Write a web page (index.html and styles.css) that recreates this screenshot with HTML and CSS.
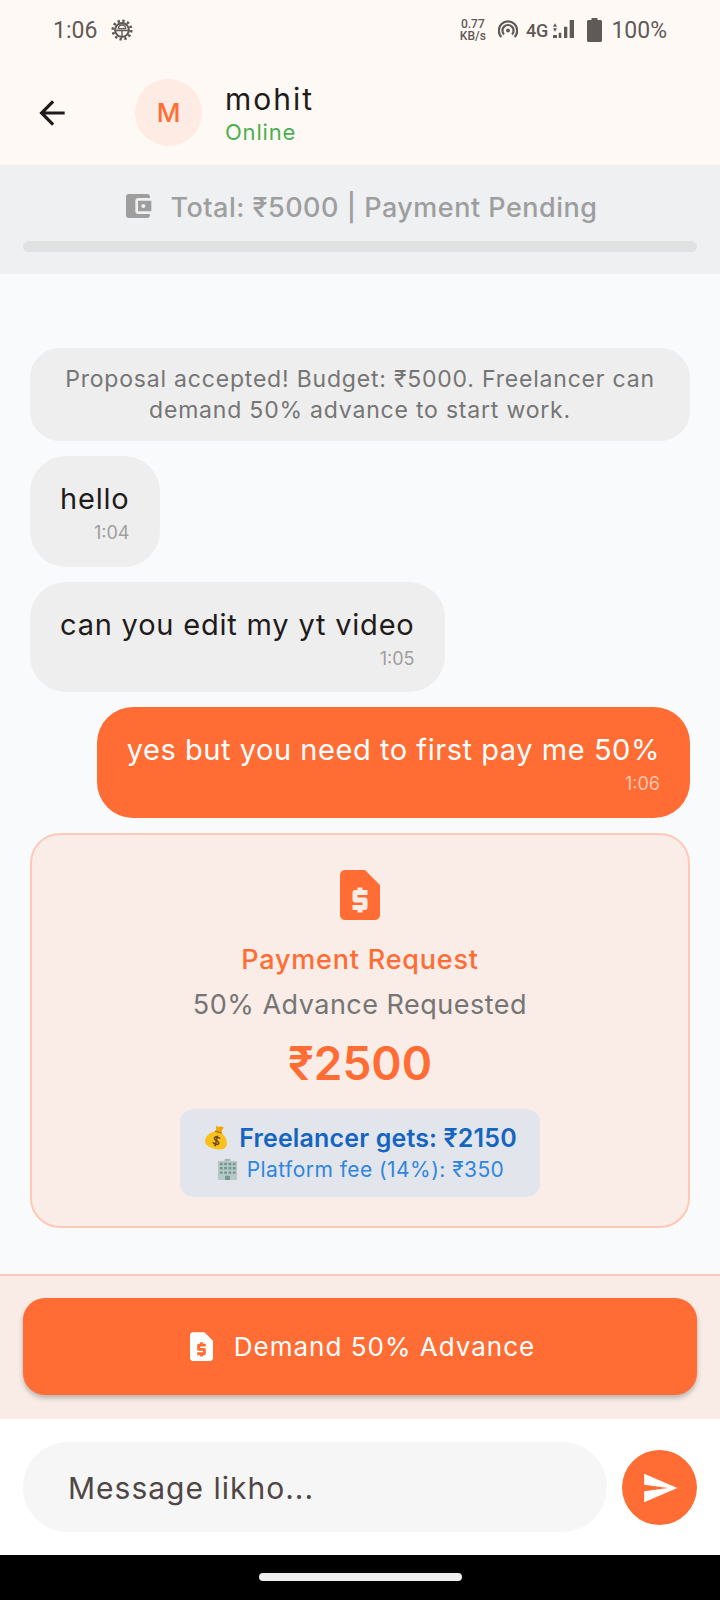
FILE: index.html
```html
<!DOCTYPE html>
<html lang="en">
<head>
    <meta charset="UTF-8">
    <title>Chat</title>
    <link rel="stylesheet" href="styles.css">
</head>
<body>

<div class="top">
    <div class="status">
        <div class="status-left">
            <span class="clock">1:06</span>
            <svg class="gear" viewBox="0 0 24 24">
                <circle cx="12" cy="12" r="7.500" fill="none" stroke="#5f5a57" stroke-width="2.200"/>
                <circle cx="12" cy="12" r="10" fill="none" stroke="#5f5a57" stroke-width="3" stroke-dasharray="2.600 2.640"/>
                <path d="M5 12.500h14M12 12.500v6M8 10.500a4 4 0 0 1 8 0z" stroke="#5f5a57" stroke-width="1.500" fill="none"/>
            </svg>
        </div>
        <div class="status-right">
            <div class="speed"><span>0.77</span><span>KB/s</span></div>
            <svg class="hotspot" viewBox="0 0 20 20">
                <circle cx="10" cy="10.500" r="2" fill="#5f5a57"/>
                <path d="M6 14.500a5.600 5.600 0 1 1 8 0M3.400 17a9.200 9.200 0 1 1 13.200 0" fill="none" stroke="#5f5a57" stroke-width="2.200"/>
            </svg>
            <span class="net">4G</span>
            <svg class="signal" viewBox="0 0 22 20">
                <path d="M2 3.300l2 3.400H0zM2 11.700L0 8.300h4z" fill="#5f5a57"/>
                <path d="M0 15h4v3H0zM5.700 12.700h2.600V18H5.700zM11 6.700h3.300V18H11zM16.700 0H21v18h-4.300z" fill="#5f5a57"/>
            </svg>
            <svg class="battery" viewBox="0 0 15 24">
                <path d="M4.500 0h6v2h3c.8 0 1.500.7 1.500 1.500v19c0 .8-.7 1.500-1.500 1.500h-12C.7 24 0 23.300 0 22.500v-19C0 2.700.7 2 1.500 2h3z" fill="#5f5a57"/>
            </svg>
            <span class="pct">100%</span>
        </div>
    </div>
    <div class="appbar">
        <svg class="back" viewBox="0 0 24 24"><path d="M20 11H7.830l5.590-5.590L12 4l-8 8 8 8 1.410-1.410L7.830 13H20v-2z"/></svg>
        <div class="avatar">M</div>
        <div class="who">
            <div class="name">mohit</div>
            <div class="online">Online</div>
        </div>
    </div>
</div>

<div class="total">
    <div class="total-line">
        <svg class="wallet" viewBox="0 0 24 24"><path d="M21 18v1c0 1.100-.9 2-2 2H5c-1.110 0-2-.9-2-2V5c0-1.100.890-2 2-2h14c1.100 0 2 .9 2 2v1h-9c-1.110 0-2 .9-2 2v8c0 1.100.890 2 2 2h9zm-9-2h10V8H12v8zm4-2.500c-.830 0-1.500-.670-1.500-1.500s.670-1.500 1.500-1.500 1.500.670 1.500 1.500-.670 1.500-1.500 1.500z"/></svg>
        <span>Total: ₹5000 | Payment Pending</span>
    </div>
    <div class="progress"></div>
</div>

<div class="chat">
    <div class="system">Proposal accepted! Budget: ₹5000. Freelancer can demand 50% advance to start work.</div>

    <div class="bubble them">
        <div class="msg">hello</div>
        <div class="time">1:04</div>
    </div>
    <div class="bubble them">
        <div class="msg">can you edit my yt video</div>
        <div class="time">1:05</div>
    </div>
    <div class="bubble me">
        <div class="msg">yes but you need to first pay me 50%</div>
        <div class="time">1:06</div>
    </div>

    <div class="request">
        <svg class="request-icon" viewBox="4 2 16 20"><path d="M14 2H6c-1.100 0-1.990.9-1.990 2L4 20c0 1.100.890 2 1.990 2H18c1.100 0 2-.9 2-2V8l-6-6zm1 10h-4v1h3c.550 0 1 .450 1 1v3c0 .550-.450 1-1 1h-1v1h-2v-1H9v-2h4v-1h-3c-.550 0-1-.450-1-1v-3c0-.550.450-1 1-1h1V9h2v1h2v2z"/></svg>
        <div class="request-title">Payment Request</div>
        <div class="request-sub">50% Advance Requested</div>
        <div class="request-amount">₹2500</div>
        <div class="split">
            <div class="split-main">
                <svg class="emoji" viewBox="0 0 28 25">
                    <g transform="rotate(14 14 13)">
                        <path d="M10.500 7C5 10 2.500 14.500 3 18.500 3.500 22.500 8 24 14 24s10.500-1.500 11-5.500c.5-4-2-8.500-7.500-11.500z" fill="#fcc21b"/>
                        <path d="M10 1c1.500 1 2.500.8 4 .3s3-.8 4-.3l-1.500 5.500h-5z" fill="#f2a600"/>
                        <path d="M10.500 7h7" stroke="#b9770e" stroke-width="1.600"/>
                        <path d="M17 13c-1-1.500-5.500-1.500-5.500.8s5.500 1.400 5.500 3.700-4.500 2.300-6 .7M14 10.500v11" fill="none" stroke="#6b4a1e" stroke-width="1.600"/>
                    </g>
                </svg>
                <span>Freelancer gets: ₹2150</span>
            </div>
            <div class="split-fee">
                <svg class="emoji small" viewBox="0 0 24 24">
                    <path d="M2 3h20v20H2z" fill="#b9c8c6"/>
                    <path d="M9 1h6v2H9z" fill="#a3b3b1"/>
                    <path d="M4 5h3v2.500H4zM8.500 5h3v2.500h-3zM13 5h3v2.500h-3zM17.500 5h3v2.500h-3zM4 9.500h3V12H4zM8.500 9.500h3V12h-3zM13 9.500h3V12h-3zM17.500 9.500h3V12h-3zM4 14h3v2.500H4zM8.500 14h3v2.500h-3zM13 14h3v2.500h-3zM17.500 14h3v2.500h-3zM9.500 18.500h5V23h-5z" fill="#6f9a94"/>
                </svg>
                <span>Platform fee (14%): ₹350</span>
            </div>
        </div>
    </div>
</div>

<div class="demand">
    <div class="demand-btn">
        <svg class="demand-icon" viewBox="4 2 16 20"><path d="M14 2H6c-1.100 0-1.990.9-1.990 2L4 20c0 1.100.890 2 1.990 2H18c1.100 0 2-.9 2-2V8l-6-6zm1 10h-4v1h3c.550 0 1 .450 1 1v3c0 .550-.450 1-1 1h-1v1h-2v-1H9v-2h4v-1h-3c-.550 0-1-.450-1-1v-3c0-.550.450-1 1-1h1V9h2v1h2v2z"/></svg>
        <span>Demand 50% Advance</span>
    </div>
</div>

<div class="composer">
    <div class="field">Message likho...</div>
    <div class="send">
        <svg viewBox="0 0 24 24"><path d="M2.010 21L23 12 2.010 3 2 10l15 2-15 2z"/></svg>
    </div>
</div>

<div class="navbar">
    <div class="handle"></div>
</div>

</body>
</html>
```

FILE: styles.css
```css
body {
    margin: 0;
    width: 720px;
    height: 1600px;
    display: flex;
    flex-direction: column;
    font-family: "Inter", "Liberation Sans", sans-serif;
    color: #1f1b1a;
    background: #f8fafc;
    overflow: hidden;
}

.top {
    height: 165px;
    background: #fff9f5;
    flex-shrink: 0;
}

.status {
    height: 60px;
    padding: 0 53px;
    display: flex;
    justify-content: space-between;
    align-items: center;
    color: #5f5a57;
    font-family: "Roboto", sans-serif;
}

.status-left, .status-right {
    display: flex;
    align-items: center;
}

.clock {
    font-size: 23px;
}

.gear {
    width: 22px;
    height: 22px;
    margin-left: 14px;
}

.speed {
    display: flex;
    flex-direction: column;
    align-items: center;
    font-size: 12px;
    line-height: 12px;
    font-weight: 500;
}

.hotspot {
    width: 20px;
    height: 20px;
    margin-left: 12px;
}

.net {
    font-size: 18px;
    font-weight: 500;
    margin-left: 8px;
}

.signal {
    width: 22px;
    height: 20px;
    margin-left: 5px;
}

.battery {
    width: 15px;
    height: 24px;
    margin-left: 12px;
}

.pct {
    font-size: 23px;
    margin-left: 9px;
}

.appbar {
    height: 105px;
    display: flex;
    align-items: center;
    padding-left: 33px;
}

.back {
    width: 38px;
    height: 38px;
    fill: #1f1b1a;
    flex-shrink: 0;
}

.avatar {
    width: 67px;
    height: 67px;
    margin-left: 64px;
    border-radius: 50%;
    background: #fdebe4;
    color: #ff6d35;
    font-size: 26px;
    font-weight: 500;
    display: flex;
    align-items: center;
    justify-content: center;
}

.who {
    margin-left: 23px;
}

.name {
    font-size: 30px;
    line-height: 36px;
    letter-spacing: 2px;
}

.online {
    margin-top: 2px;
    font-size: 22px;
    line-height: 26px;
    letter-spacing: 0.8px;
    color: #4caf50;
}

.total {
    height: 109px;
    box-sizing: border-box;
    flex-shrink: 0;
    background: #eef0f2;
    padding: 19px 23px 0;
}

.total-line {
    display: flex;
    justify-content: center;
    align-items: center;
    color: #9e9e9e;
    font-size: 27px;
    font-weight: 500;
    letter-spacing: 0.5px;
    line-height: 40px;
    margin-bottom: 13px;
}

.total-line span {
    margin-top: 4px;
}

.wallet {
    width: 32px;
    height: 32px;
    fill: #9e9e9e;
    margin-right: 16px;
}

.progress {
    height: 11px;
    border-radius: 6px;
    background: #e0e2e2;
}

.chat {
    flex: 1;
    padding: 74px 30px 0;
    display: flex;
    flex-direction: column;
    gap: 15px;
    align-items: flex-start;
}

.system {
    align-self: stretch;
    box-sizing: border-box;
    height: 93px;
    padding: 16px 20px;
    border-radius: 30px;
    background: #eeeeee;
    color: #757575;
    font-size: 23px;
    letter-spacing: 0.8px;
    line-height: 31px;
    text-align: center;
}

.bubble {
    box-sizing: border-box;
    height: 110.500px;
    padding: 21px 30px 0;
    border-radius: 36px;
    background: #eeeeee;
    font-size: 29px;
    letter-spacing: 0.8px;
}

.msg {
    line-height: 43px;
}

.time {
    margin-top: 1px;
    font-size: 18px;
    line-height: 24px;
    letter-spacing: 0;
    color: #9e9e9e;
    text-align: right;
}

.me {
    align-self: flex-end;
    background: #ff6d35;
    color: #ffffff;
    letter-spacing: 0.55px;
}

.me .time {
    color: #ffc4ae;
}

.request {
    align-self: stretch;
    box-sizing: border-box;
    height: 395.500px;
    padding-top: 35px;
    border: 2px solid #ffc9b5;
    border-radius: 30px;
    background: #faece6;
    display: flex;
    flex-direction: column;
    align-items: center;
}

.request-icon {
    width: 40px;
    height: 50px;
    fill: #ff6d35;
}

.request-title {
    margin-top: 20px;
    font-size: 27px;
    font-weight: 500;
    letter-spacing: 0.8px;
    line-height: 40px;
    color: #ff6d35;
}

.request-sub {
    margin-top: 5px;
    font-size: 27px;
    letter-spacing: 0.5px;
    line-height: 40px;
    color: #757575;
}

.request-amount {
    margin-top: 6px;
    font-size: 46px;
    font-weight: 600;
    line-height: 64px;
    color: #ff6d35;
}

.split {
    margin-top: 14px;
    width: 360px;
    height: 88px;
    box-sizing: border-box;
    padding-top: 12px;
    border-radius: 14px;
    background: #e3e5ec;
    text-align: center;
}

.split-main {
    display: flex;
    justify-content: center;
    align-items: center;
    gap: 8px;
    font-size: 25px;
    font-weight: 600;
    letter-spacing: 0.15px;
    line-height: 34px;
    color: #1565c0;
}

.split-fee {
    display: flex;
    justify-content: center;
    align-items: center;
    gap: 8px;
    font-size: 21px;
    letter-spacing: 0.45px;
    line-height: 30px;
    color: #2e86de;
}

.emoji {
    width: 28px;
    height: 25px;
}

.emoji.small {
    width: 23px;
    height: 23px;
}

.demand {
    height: 145px;
    box-sizing: border-box;
    flex-shrink: 0;
    padding: 22px 23px 0;
    border-top: 2px solid #ffc9b5;
    background: #f9ece6;
}

.demand-btn {
    height: 97px;
    box-sizing: border-box;
    padding-left: 5px;
    border-radius: 22px;
    background: #ff6d35;
    color: #ffffff;
    font-size: 26px;
    letter-spacing: 1px;
    display: flex;
    align-items: center;
    justify-content: center;
    gap: 21px;
    box-shadow: 0 3px 5px rgba(0, 0, 0, 0.25);
}

.demand-icon {
    width: 23px;
    height: 29px;
    fill: #ffffff;
}

.composer {
    height: 136px;
    box-sizing: border-box;
    flex-shrink: 0;
    padding: 23px 23px 0;
    background: #ffffff;
    display: flex;
    align-items: flex-start;
    gap: 15px;
}

.field {
    width: 584px;
    height: 90px;
    box-sizing: border-box;
    padding: 2px 0 0 45px;
    border-radius: 45px;
    background: #f6f6f6;
    color: #4f4646;
    font-size: 30px;
    letter-spacing: 1px;
    line-height: 88px;
}

.send {
    width: 75px;
    height: 75px;
    margin-top: 8px;
    border-radius: 50%;
    background: #ff6d35;
    display: flex;
    align-items: center;
    justify-content: center;
}

.send svg {
    width: 38px;
    height: 38px;
    fill: #ffffff;
}

.navbar {
    height: 45px;
    flex-shrink: 0;
    background: #000000;
    display: flex;
    justify-content: center;
    padding-top: 18px;
    box-sizing: border-box;
}

.handle {
    width: 203px;
    height: 8px;
    border-radius: 4px;
    background: #eeeeee;
}
```
